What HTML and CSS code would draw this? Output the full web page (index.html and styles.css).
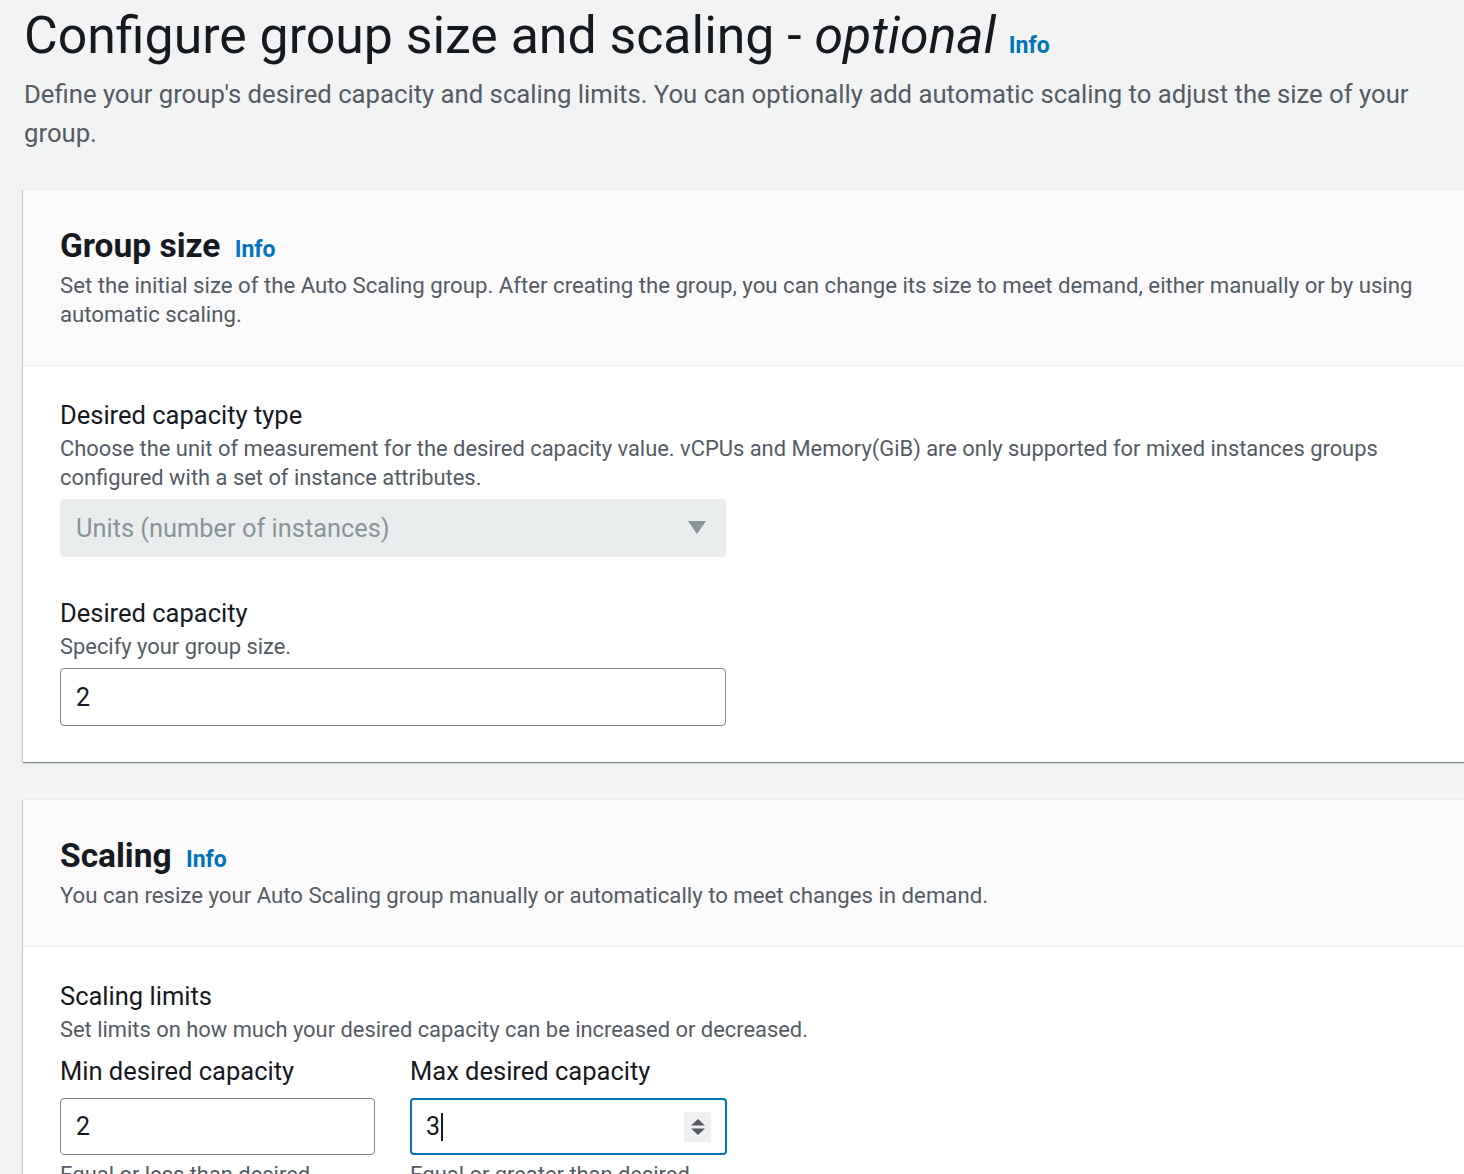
FILE: index.html
```html
<!DOCTYPE html>
<html lang="en">
<head>
<meta charset="utf-8">
<title>Configure group size and scaling</title>
<link rel="stylesheet" href="styles.css">
</head>
<body>
<main class="page">
  <header class="page-header">
    <h1 class="page-title">Configure group size and scaling - <em>optional</em> <a class="info info-lg" href="#">Info</a></h1>
    <p class="page-desc">Define your group's desired capacity and scaling limits. You can optionally add automatic scaling to adjust the size of your group.</p>
  </header>

  <section class="card">
    <div class="card-header">
      <h2 class="card-title">Group size <a class="info" href="#">Info</a></h2>
      <p class="card-desc">Set the initial size of the Auto Scaling group. After creating the group, you can change its size to meet demand, either manually or by using automatic scaling.</p>
    </div>
    <div class="card-body">
      <div class="field">
        <div class="label">Desired capacity type</div>
        <div class="hint">Choose the unit of measurement for the desired capacity value. vCPUs and Memory(GiB) are only supported for mixed instances groups configured with a set of instance attributes.</div>
        <div class="select">
          <span>Units (number of instances)</span>
          <svg class="caret-down" width="18" height="14" viewBox="0 0 18 14"><path d="M0 0 H18 L9 13 Z" fill="#879596"/></svg>
        </div>
      </div>
      <div class="field field-gap">
        <div class="label">Desired capacity</div>
        <div class="hint">Specify your group size.</div>
        <div class="input">2</div>
      </div>
    </div>
  </section>

  <section class="card card-2">
    <div class="card-header">
      <h2 class="card-title">Scaling <a class="info" href="#">Info</a></h2>
      <p class="card-desc">You can resize your Auto Scaling group manually or automatically to meet changes in demand.</p>
    </div>
    <div class="card-body">
      <div class="label">Scaling limits</div>
      <div class="hint">Set limits on how much your desired capacity can be increased or decreased.</div>
      <div class="limits">
        <div class="limit">
          <div class="label">Min desired capacity</div>
          <div class="input">2</div>
          <div class="hint hint-below">Equal or less than desired</div>
        </div>
        <div class="limit">
          <div class="label">Max desired capacity</div>
          <div class="input input-focus"><span class="value">3</span><span class="text-caret"></span>
            <span class="spinner">
              <svg width="16" height="22" viewBox="0 0 16 22"><path d="M8 3 L15 9.5 H1 Z M1 12.5 H15 L8 19 Z" fill="#545b64"/></svg>
            </span>
          </div>
          <div class="hint hint-below">Equal or greater than desired</div>
        </div>
      </div>
    </div>
  </section>
</main>
</body>
</html>
```

FILE: styles.css
```css
* { box-sizing: border-box; }

html, body {
  margin: 0;
  padding: 0;
  background: #f2f3f3;
  overflow: hidden;
  height: 100%;
}

body {
  font-family: Roboto, "Liberation Sans", sans-serif;
  color: #16191f;
}

.page {
  padding: 8px 0 0 24px;
}

.page-title {
  margin: 0;
  font-size: 51.8px;
  line-height: 56px;
  font-weight: 400;
  color: #16191f;
  white-space: nowrap;
}

.page-title em {
  font-style: italic;
}

.info {
  color: #0073bb;
  font-weight: 700;
  text-decoration: none;
  font-size: 23px;
  margin-left: 6px;
}

.info-lg {
  font-size: 23px;
  margin-left: 0;
}

.page-desc {
  margin: 1px 0 0;
  font-size: 25.7px;
  line-height: 39px;
  color: #545b64;
  max-width: 1420px;
}

.card {
  margin: 36px -60px 0 -1px;
  background: #ffffff;
  border-top: 1px solid #eaeded;
  box-shadow: 0 1px 1px 0 rgba(0, 28, 36, 0.3), 1px 1px 1px 0 rgba(0, 28, 36, 0.15), -1px 1px 1px 0 rgba(0, 28, 36, 0.15);
}

.card-2 {
  margin-top: 37px;
}

.card-header {
  background: #fafafa;
  border-bottom: 1px solid #eaeded;
  padding: 36px 60px 36px 37px;
}

.card-title {
  margin: 0;
  font-size: 33.5px;
  line-height: 40px;
  font-weight: 700;
  color: #16191f;
}

.card-desc {
  margin: 1px 0 0;
  font-size: 22.2px;
  line-height: 29px;
  color: #545b64;
  max-width: 1375px;
}

.card-body {
  padding: 33px 60px 36px 37px;
}

.label {
  font-size: 25.5px;
  line-height: 32px;
  color: #16191f;
}

.hint {
  margin-top: 3px;
  font-size: 21.9px;
  line-height: 29px;
  color: #545b64;
  max-width: 1375px;
}

.field-gap {
  margin-top: 40px;
}

.select {
  margin-top: 7px;
  width: 666px;
  height: 58px;
  border-radius: 4px;
  background: #eaeded;
  color: #879596;
  font-size: 25.4px;
  display: flex;
  align-items: center;
  justify-content: space-between;
  padding: 0 20px 0 16px;
}

.caret-down {
  display: block;
}

.input {
  margin-top: 7px;
  width: 666px;
  height: 58px;
  border: 1px solid #7d8998;
  border-radius: 4px;
  background: #ffffff;
  font-size: 25px;
  color: #16191f;
  display: flex;
  align-items: center;
  padding: 0 15px;
}

.limits {
  display: grid;
  grid-template-columns: 315px 317px;
  column-gap: 35px;
  margin-top: 11px;
}

.limit .input {
  width: 100%;
  height: 57px;
  margin-top: 11px;
}

.input-focus {
  border: 2px solid #0073bb;
  padding: 0 14px;
}

.text-caret {
  display: inline-block;
  width: 2px;
  height: 28px;
  background: #16191f;
  margin-left: 1px;
}

.spinner {
  margin-left: auto;
  width: 27px;
  height: 30px;
  background: #f0f0f0;
  display: flex;
  align-items: center;
  justify-content: center;
}

.spinner svg {
  display: block;
}

.hint-below {
  margin-top: 5px;
}
```
